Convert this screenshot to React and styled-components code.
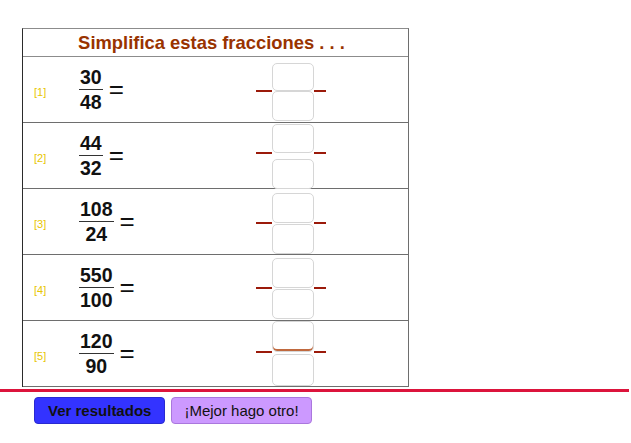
import React from 'react'
import styled, { createGlobalStyle } from 'styled-components'

const GlobalStyle = createGlobalStyle`
  html, body {
    margin: 0;
    padding: 0;
    background: #ffffff;
    font-family: "Liberation Sans", Arial, sans-serif;
  }
`

const rows = [
  { id: 1, num: '30', den: '48', pad: 6, top: 28, gap: 0, bottom: 30 },
  { id: 2, num: '44', den: '32', pad: 1, top: 29, gap: 6, bottom: 30 },
  { id: 3, num: '108', den: '24', pad: 4, top: 30, gap: 1, bottom: 30 },
  { id: 4, num: '550', den: '100', pad: 3, top: 30, gap: 1, bottom: 30 },
  { id: 5, num: '120', den: '90', pad: 0, top: 31, gap: 2, bottom: 32, crossed: true },
]

const App = () => {
  return (
    <>
      <GlobalStyle />
      <Page>
        <Table>
          <HeaderRow>Simplifica estas fracciones . . .</HeaderRow>
          {rows.map(r => (
            <Row key={r.id}>
              <Label>[{r.id}]</Label>
              <MathCell>
                <Fraction>
                  <Num>{r.num}</Num>
                  <Den>{r.den}</Den>
                </Fraction>
                <Equals>=</Equals>
              </MathCell>
              <Answer $pad={r.pad}>
                <Stub $w={16} $at={r.top - 1} />
                <Boxes $gap={r.gap}>
                  <InputBox $h={r.top} $crossed={r.crossed} />
                  <InputBox $h={r.bottom} />
                </Boxes>
                <Stub $w={12} $at={r.top - 1} />
              </Answer>
            </Row>
          ))}
        </Table>
        <Divider />
        <ButtonBar>
          <Button $variant="primary">Ver resultados</Button>
          <Button>¡Mejor hago otro!</Button>
        </ButtonBar>
      </Page>
    </>
  )
}

const Page = styled.div`
  width: 631px;
  height: 443px;
  padding-top: 28px;
  box-sizing: border-box;
  overflow: hidden;
`

const Table = styled.div`
  margin-left: 22px;
  width: 387px;
  box-sizing: border-box;
  border-top: 1px solid #8c8c8c;
  border-right: 1px solid #6e6e6e;
  border-left: 1px solid #2b2b2b;
`

const HeaderRow = styled.div`
  height: 27px;
  display: flex;
  align-items: center;
  justify-content: center;
  padding-right: 8px;
  border-bottom: 1px solid #8c8c8c;
  color: #993300;
  font-weight: bold;
  font-size: 18.4px;
`

const Row = styled.div`
  height: 65px;
  display: grid;
  grid-template-columns: 56px 177px auto;
  align-items: center;
  border-bottom: 1px solid #6e6e6e;
`

const Label = styled.span`
  padding-left: 11px;
  font-size: 11px;
  color: #e8c600;
  align-self: center;
  margin-top: 4px;
`

const MathCell = styled.div`
  display: flex;
  align-items: center;
  color: #111111;
`

const Fraction = styled.div`
  display: inline-flex;
  flex-direction: column;
  align-items: stretch;
  text-align: center;
  font-weight: bold;
  font-size: 19.5px;
  line-height: 21px;
`

const Num = styled.span`
  padding: 0 1px 1px;
  border-bottom: 1.5px solid #333333;
`

const Den = styled.span`
  padding: 2px 1px 0;
`

const Equals = styled.span`
  margin-left: 6px;
  font-size: 26px;
  line-height: 26px;
  margin-top: -2px;
`

const Answer = styled.div`
  align-self: start;
  display: flex;
  align-items: flex-start;
  padding-top: ${p => p.$pad}px;
  height: 65px;
  box-sizing: border-box;
`

const Stub = styled.span`
  width: ${p => p.$w}px;
  height: 2px;
  margin-top: ${p => p.$at}px;
  background: #9b1a0a;
`

const Boxes = styled.div`
  display: flex;
  flex-direction: column;
  gap: ${p => p.$gap}px;
`

const InputBox = styled.div`
  width: 42px;
  height: ${p => p.$h}px;
  box-sizing: border-box;
  border: 1px solid #d6d6d6;
  border-radius: 5px;
  background: #ffffff;
  box-shadow: ${p => (p.$crossed ? 'inset 0 -2px 0 #c0693e' : 'none')};
`

const Divider = styled.div`
  width: 629px;
  height: 3px;
  margin-top: 2px;
  background: #dc143c;
`

const ButtonBar = styled.div`
  display: flex;
  gap: 6px;
  padding: 5px 0 0 34px;
`

const Button = styled.button`
  height: 27px;
  padding: 0 ${p => (p.$variant === 'primary' ? '13px' : '12px')};
  border-radius: 4px;
  font-family: "Liberation Sans", Arial, sans-serif;
  font-size: 15px;
  font-weight: ${p => (p.$variant === 'primary' ? 'bold' : 'normal')};
  color: #111111;
  background: ${p => (p.$variant === 'primary' ? '#3333ff' : '#cc99ff')};
  border: 1px solid ${p => (p.$variant === 'primary' ? '#2a2ad0' : '#aa77dd')};
  cursor: pointer;
`

export default App
